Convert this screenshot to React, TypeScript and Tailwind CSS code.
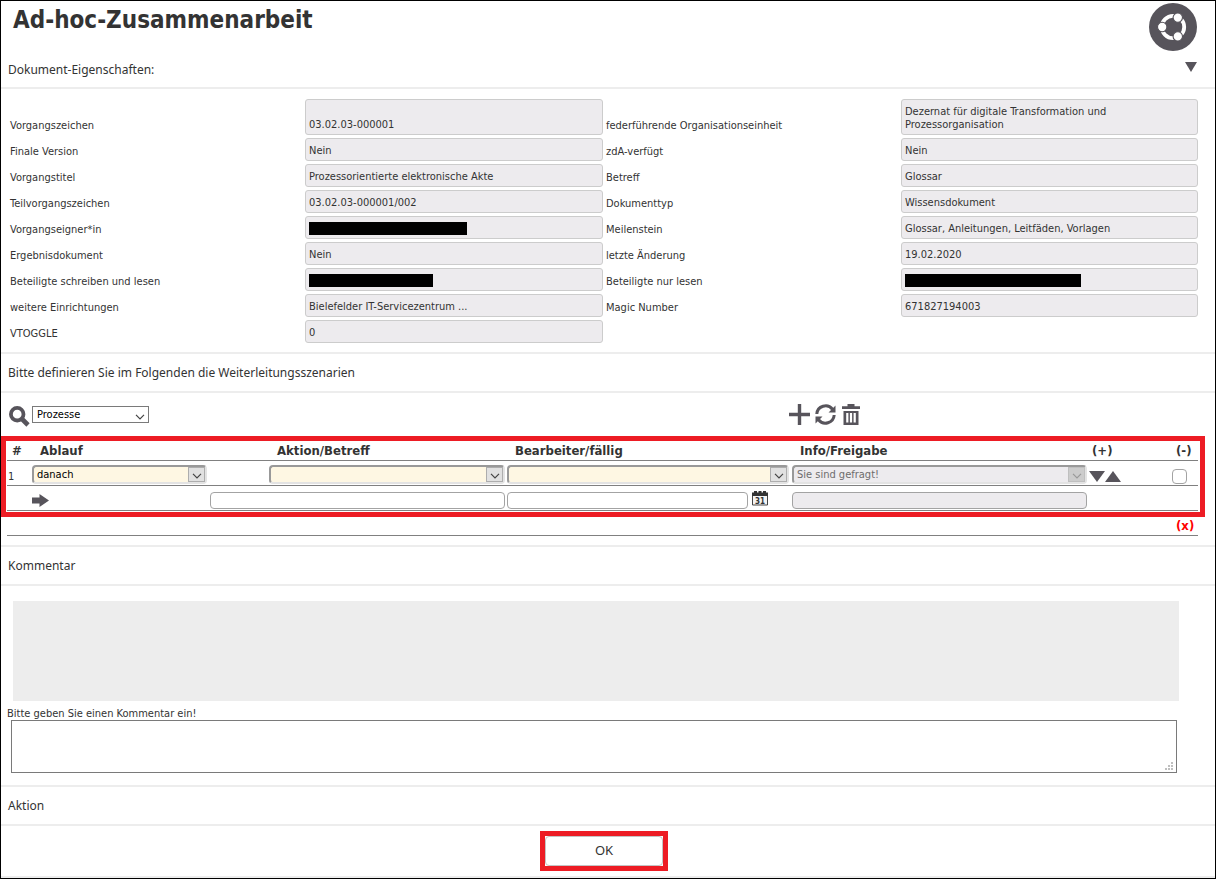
import type { ReactNode } from 'react';

type Field = { label: string; value?: string; bar?: string };

const fields: Field[] = [
  { label: 'Vorgangszeichen', value: '03.02.03-000001' },
  { label: 'federführende Organisationseinheit', value: 'Dezernat für digitale Transformation und Prozessorganisation' },
  { label: 'Finale Version', value: 'Nein' },
  { label: 'zdA-verfügt', value: 'Nein' },
  { label: 'Vorgangstitel', value: 'Prozessorientierte elektronische Akte' },
  { label: 'Betreff', value: 'Glossar' },
  { label: 'Teilvorgangszeichen', value: '03.02.03-000001/002' },
  { label: 'Dokumenttyp', value: 'Wissensdokument' },
  { label: 'Vorgangseigner*in', bar: 'w-[158px]' },
  { label: 'Meilenstein', value: 'Glossar, Anleitungen, Leitfäden, Vorlagen' },
  { label: 'Ergebnisdokument', value: 'Nein' },
  { label: 'letzte Änderung', value: '19.02.2020' },
  { label: 'Beteiligte schreiben und lesen', bar: 'w-[124px]' },
  { label: 'Beteiligte nur lesen', bar: 'w-[176px]' },
  { label: 'weitere Einrichtungen', value: 'Bielefelder IT-Servicezentrum ...' },
  { label: 'Magic Number', value: '671827194003' },
  { label: 'VTOGGLE', value: '0' },
];

function SectionTitle({ children }: { children: ReactNode }) {
  return (
    <h2 className="flex h-[41px] items-center border-y-2 border-[#ededed] px-[7px] pt-px font-['Noto_Sans',sans-serif] text-[12px] leading-4">
      {children}
    </h2>
  );
}

function Chevron() {
  return (
    <svg viewBox="0 0 10 6" className="h-[6px] w-[10px]" fill="none" stroke="currentColor" strokeWidth="1.2">
      <path d="M1 .8 5 4.8 9 .8" />
    </svg>
  );
}

function InsetSelect({ label, option, disabled = false }: { label: string; option: string; disabled?: boolean }) {
  return (
    <div
      className={
        'relative h-[19px] rounded-[4px] border-2 border-t-[#999] border-l-[#999] border-r-[#e3e3e3] border-b-[#e3e3e3] ' +
        (disabled ? 'bg-[#edebee] text-[#6d6d6d]' : 'bg-[#fef7e3] text-black')
      }
    >
      <select
        aria-label={label}
        disabled={disabled}
        className="block h-[15px] w-full appearance-none bg-transparent pr-5 pl-[3px] text-[11px] leading-[15px] opacity-100 outline-none"
      >
        <option>{option}</option>
      </select>
      <span
        className={
          'pointer-events-none absolute top-0 right-0 flex h-[15px] w-[17px] items-center justify-center border pt-[3px] ' +
          (disabled ? 'border-[#bfbfbf] bg-[#ccc] text-[#999]' : 'border-[#adadad] bg-[#e1e1e1] text-[#444]')
        }
      >
        <Chevron />
      </span>
    </div>
  );
}

const inputClass = 'block h-[17px] rounded-[4px] border border-[#a3a3a3] px-1 text-[11px] outline-none';

export default function App() {
  return (
    <main className="border border-black bg-white font-['DejaVu_Sans_Condensed','DejaVu_Sans',sans-serif] text-[11px] leading-[13px] text-[#333]">
      <header className="flex h-[86px] justify-between pr-[18px] pl-[7px]">
        <div className="flex flex-col justify-between pb-[9px]">
          <h1 className="pt-[5px] pl-[5px] text-[24px] leading-7 font-bold">Ad-hoc-Zusammenarbeit</h1>
          <p className="font-['Noto_Sans',sans-serif] text-[12px] leading-4">Dokument-Eigenschaften:</p>
        </div>
        <div className="flex flex-col items-end justify-between pt-[2px] pb-[15px]">
          <svg viewBox="-24 -24 48 48" className="h-12 w-12">
            <circle r="24" fill="#57545b" />
            <circle r="11.2" fill="none" stroke="#fff" strokeWidth="3.8" />
            <g fill="#fff" stroke="#57545b" strokeWidth="1.1">
              <circle cx="-10.8" r="4.7" />
              <circle cx="4.8" cy="-9.4" r="4.7" />
              <circle cx="4.8" cy="9.4" r="4.7" />
            </g>
          </svg>
          <button type="button" aria-label="Eigenschaften einklappen" className="block">
            <svg viewBox="0 0 12 10" className="h-[10px] w-3" fill="#57545b">
              <path d="M0 0H12L6 10Z" />
            </svg>
          </button>
        </div>
      </header>

      <dl className="grid grid-cols-[298fr_298fr_298fr_297fr] gap-y-[3px] border-t-2 border-[#ededed] pt-[10px] pr-[17px] pb-[9px] pl-[6px]">
        {fields.map((f) => (
          <div key={f.label} className="col-span-2 grid grid-cols-subgrid">
            <dt className="flex items-end pb-[3px] pl-[3px]">{f.label}</dt>
            <dd className="flex items-end rounded-[3px] border border-[#ccc] bg-[#edebee] px-[3px] pt-[5px] pb-[3px]">
              {f.bar ? <span className={'h-[13px] bg-black ' + f.bar} /> : <span className="w-[240px]">{f.value}</span>}
            </dd>
          </div>
        ))}
      </dl>

      <SectionTitle>Bitte definieren Sie im Folgenden die Weiterleitungsszenarien</SectionTitle>

      <section className="pr-[17px] pb-[9px] pl-[6px]">
        <div className="flex h-[43px] items-center">
          <svg viewBox="0 0 21 21" className="mt-[4px] ml-[2px] h-[21px] w-[21px]" fill="none" stroke="#57545b">
            <circle cx="8.2" cy="8.2" r="6.3" strokeWidth="3.8" />
            <path d="m12.5 12.5 6.5 6.5" strokeWidth="4.6" />
          </svg>
          <div className="relative ml-[2px] h-[17px] w-[117px] border border-[#7a7a7a] text-black">
            <select
              aria-label="Szenario"
              className="block h-[15px] w-full appearance-none bg-transparent pl-1 text-[11px] leading-[15px] outline-none"
            >
              <option>Prozesse</option>
            </select>
            <span className="pointer-events-none absolute top-[7px] right-[3px] text-[#444]">
              <Chevron />
            </span>
          </div>
          <div className="mr-[338px] ml-auto flex items-center gap-[5px] text-[#57545b]">
            <button type="button" aria-label="Hinzufügen">
              <svg viewBox="0 0 21 21" className="block h-[21px] w-[21px]" stroke="currentColor" strokeWidth="3.4">
                <path d="M10.5 0V21M0 10.5H21" />
              </svg>
            </button>
            <button type="button" aria-label="Aktualisieren">
              <svg viewBox="0 0 21 21" className="block h-[21px] w-[21px]" fill="none" stroke="currentColor" strokeWidth="3">
                <path d="M1.8 10A8.8 8.8 0 0 1 17.5 5.2M19.2 11A8.8 8.8 0 0 1 3.5 15.8" />
                <path d="M20.5 1.5V8.5H13.5ZM.5 19.5V12.5H7.5Z" fill="currentColor" stroke="none" />
              </svg>
            </button>
            <button type="button" aria-label="Löschen">
              <svg viewBox="0 0 19 21" className="block h-[21px] w-[19px]" fill="currentColor" fillRule="evenodd">
                <path d="M6.5 0H13.5V2.2H19V5H1V2.2H6.5ZM2.5 7H17.5V21H2.5ZM5.2 9V18.5H7.4V9ZM8.9 9V18.5H11.1V9ZM12.6 9V18.5H14.8V9Z" />
              </svg>
            </button>
          </div>
        </div>

        <div className="relative">
          <table className="w-full table-fixed border-collapse text-left">
            <colgroup>
              <col className="w-[25px]" />
              <col className="w-[237px]" />
              <col className="w-[238px]" />
              <col className="w-[285px]" />
              <col className="w-[297px]" />
              <col className="w-[75px]" />
              <col className="w-[34px]" />
            </colgroup>
            <thead>
              <tr className="h-[24px] border-b border-[#808080] text-[13px]">
                <th className="pt-[5px] pl-[5px]">#</th>
                <th className="pt-[5px] pl-2">Ablauf</th>
                <th className="pt-[5px] pl-2">Aktion/Betreff</th>
                <th className="pt-[5px] pl-2">Bearbeiter/fällig</th>
                <th className="pt-[5px] pl-2">Info/Freigabe</th>
                <th className="pt-[5px] pl-[3px]">(+)</th>
                <th className="pt-[5px] pl-3">(-)</th>
              </tr>
            </thead>
            <tbody>
              <tr className="h-[25px] border-b border-[#808080]">
                <td className="pt-[7px] pl-px">1</td>
                <td className="pt-[4px] pr-[62px]">
                  <InsetSelect label="Ablauf" option="danach" />
                </td>
                <td className="pt-[4px] pr-[2px]">
                  <InsetSelect label="Aktion" option="" />
                </td>
                <td className="pt-[4px] pr-[3px]">
                  <InsetSelect label="Bearbeiter" option="" />
                </td>
                <td className="pt-[4px] pr-[2px]">
                  <InsetSelect label="Info/Freigabe" option="Sie sind gefragt!" disabled />
                </td>
                <td className="pt-[7px]">
                  <div className="flex">
                    <button type="button" aria-label="Nach unten">
                      <svg viewBox="0 0 16 11" className="block h-[11px] w-4" fill="#57545b">
                        <path d="M0 0H16L8 11Z" />
                      </svg>
                    </button>
                    <button type="button" aria-label="Nach oben">
                      <svg viewBox="0 0 16 11" className="block h-[11px] w-4" fill="#57545b">
                        <path d="M0 11H16L8 0Z" />
                      </svg>
                    </button>
                  </div>
                </td>
                <td className="pt-[7px] pl-2">
                  <input
                    type="checkbox"
                    aria-label="Zeile 1 auswählen"
                    className="block h-[15px] w-[15px] appearance-none rounded-[4px] border border-[#a3a3a3] bg-white"
                  />
                </td>
              </tr>
              <tr className="h-[25px] border-b border-[#808080]">
                <td />
                <td colSpan={2} className="pt-[6px] pr-[2px]">
                  <div className="flex items-center justify-between">
                    <svg viewBox="0 0 17 13" className="h-[13px] w-[17px]" fill="#57545b">
                      <path d="M0 3.5H7.5V0L17 6.5 7.5 13V9.5H0Z" />
                    </svg>
                    <input type="text" aria-label="Betreff" className={inputClass + ' w-[295px] bg-white'} />
                  </div>
                </td>
                <td className="pt-[6px]">
                  <div className="flex items-center gap-1 pr-[24px]">
                    <input type="text" aria-label="fällig" className={inputClass + ' min-w-0 flex-1 bg-white'} />
                    <button type="button" aria-label="Datum wählen" className="-mt-1">
                      <svg viewBox="0 0 16 15" className="block h-[15px] w-4">
                        <path
                          d="M.5 3.5H15.5V14H.5Z"
                          fill="#f4f4f4"
                          stroke="#444"
                        />
                        <path d="M0 1.5H2V0H5V1.5H6.5V0H9.5V1.5H11V0H14V1.5H16V5H0Z" fill="#333" />
                        <text x="8" y="12.5" textAnchor="middle" fontSize="8" fontWeight="bold" fill="#333">
                          31
                        </text>
                      </svg>
                    </button>
                  </div>
                </td>
                <td className="pt-[6px] pr-[2px]">
                  <input type="text" aria-label="Info" disabled className={inputClass + ' w-full bg-[#edebee]'} />
                </td>
                <td />
                <td />
              </tr>
              <tr className="h-[25px] border-b border-[#808080]">
                <td colSpan={6} />
                <td className="pt-[5px] pl-3 text-[13px] font-bold text-[#f00]">(x)</td>
              </tr>
            </tbody>
          </table>
          <div className="pointer-events-none absolute top-0 -right-[7px] -left-[6px] h-[81px] border-[5px] border-[#ed1c24]" />
        </div>
      </section>

      <SectionTitle>Kommentar</SectionTitle>

      <section className="pt-[15px] pb-3">
        <div className="mr-9 ml-3 h-[100px] bg-[#ededed]" />
        <label htmlFor="comment" className="block pt-[6px] pl-[6px]">
          Bitte geben Sie einen Kommentar ein!
        </label>
        <div className="relative mr-[38px] ml-[10px]">
          <textarea
            id="comment"
            className="block h-[53px] w-full resize-none border border-[#7a7a7a] px-1 outline-none"
          />
          <svg viewBox="0 0 8 8" className="pointer-events-none absolute right-1 bottom-[3px] h-2 w-2" fill="#bfbfbf">
            <path d="M6 0H8V2H6ZM3 3H5V5H3ZM6 3H8V5H6ZM0 6H2V8H0ZM3 6H5V8H3ZM6 6H8V8H6Z" />
          </svg>
        </div>
      </section>

      <SectionTitle>Aktion</SectionTitle>

      <section className="flex justify-center border-b-2 border-[#ededed] pt-[5px] pr-2 pb-[5px]">
        <div className="border-[5px] border-[#ed1c24]">
          <button
            type="button"
            className="block h-[30px] w-[118px] rounded-[4px] border border-[#c4c4c4] bg-white font-['Noto_Sans',sans-serif] text-[13px]"
          >
            OK
          </button>
        </div>
      </section>
    </main>
  );
}
